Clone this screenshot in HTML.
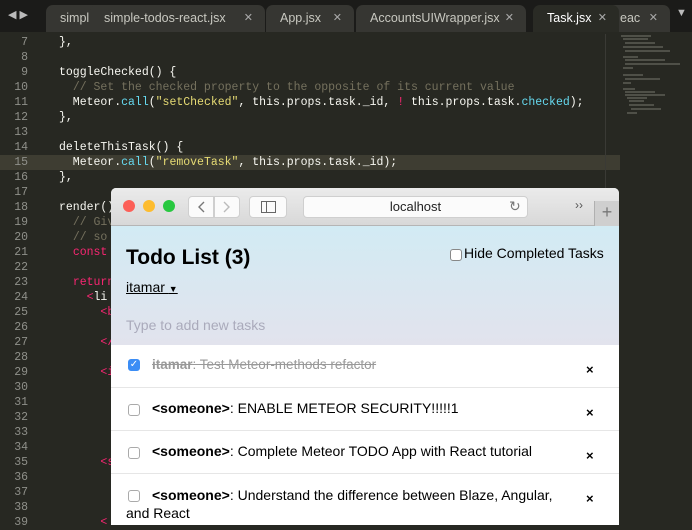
<!DOCTYPE html>
<html><head><meta charset="utf-8"><style>
*{margin:0;padding:0;box-sizing:border-box}
body{width:692px;height:525px;overflow:hidden;background:#272822;position:relative;font-family:"Liberation Sans",sans-serif}
#tabbar{position:absolute;left:0;top:0;width:692px;height:32px;background:#1b1b19}
.tab{position:absolute;top:5px;height:27px;background:#363632;border-radius:7px 7px 0 0;color:#c8c8c0;font-size:12.5px;line-height:26px;padding-left:14px;white-space:nowrap;overflow:hidden}
.tab .x{position:absolute;right:12px;top:0;font-size:11px;color:#aaa}
.tab.active{background:#2a2b25;color:#fff}
#code{position:absolute;left:0;top:35px;width:620px;font-family:"Liberation Mono",monospace;font-size:11.5px;line-height:15px;color:#f8f8f2}
.ln{display:block;height:15px;white-space:pre;position:relative}
.ln i{font-style:normal;display:inline-block;width:28px;text-align:right;color:#8f908a;margin-right:31px}
.hl{background:#3e3d32}
.c{color:#75715e}.s{color:#e6db74}.f{color:#66d9ef}.k{color:#f92672}
#mini{position:absolute;left:621px;top:35px;width:71px;height:80px}
#browser{position:absolute;left:111px;top:188px;width:508px;height:337px;background:#fff;border-radius:5px 5px 0 0;overflow:hidden}
#title{height:38px;background:linear-gradient(#ebebeb,#d8d8d8);border-bottom:1px solid #b5b5b5;position:relative}
.dot{position:absolute;top:12px;width:12px;height:12px;border-radius:50%}
.btn{position:absolute;top:8px;height:22px;background:#fbfbfb;border:1px solid #cfcfcf;border-radius:4px}
#content{position:absolute;top:38px;left:0;width:508px;height:119px;background:linear-gradient(#d2ebf4,#e2e3ed)}
.item{position:absolute;left:0;width:508px;border-top:1px solid #e6e6e6;font-size:14px;color:#000}
.cb{position:absolute;left:17px;width:12px;height:12px;border:1px solid #aaa;border-radius:3px;background:#fff}
.del{position:absolute;left:475px;font-weight:bold;font-size:13px}
</style></head><body>
<div id="tabbar">
<div style="position:absolute;left:8px;top:8px;color:#bbb;font-size:11px">◀ ▶</div>
<div class="tab" style="left:46px;width:110px">simpl</div>
<div class="tab" style="left:90px;width:175px">simple-todos-react.jsx<span class="x">✕</span></div>
<div class="tab" style="left:266px;width:88px">App.jsx<span class="x">✕</span></div>
<div class="tab" style="left:356px;width:170px">AccountsUIWrapper.jsx<span class="x">✕</span></div>
<div class="tab" style="left:580px;width:90px;padding-left:40px">eac<span class="x">✕</span></div>
<div class="tab active" style="left:533px;width:86px">Task.jsx<span class="x">✕</span></div>
<div style="position:absolute;left:676px;top:7px;color:#bbb;font-size:11px">▼</div>
</div>
<div id="code">
<span class="ln"><i>7</i>},</span>
<span class="ln"><i>8</i></span>
<span class="ln"><i>9</i>toggleChecked() {</span>
<span class="ln"><i>10</i>  <span class="c">// Set the checked property to the opposite of its current value</span></span>
<span class="ln"><i>11</i>  Meteor.<span class="f">call</span>(<span class="s">"setChecked"</span>, this.props.task._id, <span class="k">!</span> this.props.task.<span class="f">checked</span>);</span>
<span class="ln"><i>12</i>},</span>
<span class="ln"><i>13</i></span>
<span class="ln"><i>14</i>deleteThisTask() {</span>
<span class="ln hl"><i>15</i>  Meteor.<span class="f">call</span>(<span class="s">"removeTask"</span>, this.props.task._id);</span>
<span class="ln"><i>16</i>},</span>
<span class="ln"><i>17</i></span>
<span class="ln"><i>18</i>render() {</span>
<span class="ln"><i>19</i>  <span class="c">// Give</span></span>
<span class="ln"><i>20</i>  <span class="c">// so</span></span>
<span class="ln"><i>21</i>  <span class="k">const</span></span>
<span class="ln"><i>22</i></span>
<span class="ln"><i>23</i>  <span class="k">return</span></span>
<span class="ln"><i>24</i>    <span class="k">&lt;</span>li</span>
<span class="ln"><i>25</i>      <span class="k">&lt;b</span></span>
<span class="ln"><i>26</i></span>
<span class="ln"><i>27</i>      <span class="k">&lt;/</span></span>
<span class="ln"><i>28</i></span>
<span class="ln"><i>29</i>      <span class="k">&lt;i</span></span>
<span class="ln"><i>30</i></span>
<span class="ln"><i>31</i></span>
<span class="ln"><i>32</i></span>
<span class="ln"><i>33</i></span>
<span class="ln"><i>34</i></span>
<span class="ln"><i>35</i>      <span class="k">&lt;s</span></span>
<span class="ln"><i>36</i></span>
<span class="ln"><i>37</i></span>
<span class="ln"><i>38</i></span>
<span class="ln"><i>39</i>      <span class="k">&lt;</span></span>
</div>
<div style="position:absolute;left:605px;top:34px;width:1px;height:491px;background:#3a3a35"></div>
<svg id="mini" viewBox="0 0 71 80">
<g stroke="#77776f" stroke-width="1">
<path d="M0 1h30M2 4h25M4 8h30M2 12h40M4 16h45"/>
<path d="M2 22h15M4 25h40M4 29h55M2 33h10" />
<path d="M2 40h20M4 44h35M2 48h8"/>
<path d="M2 54h12M4 57h30M4 60h40M6 63h20M8 66h15M8 70h25M10 74h30M6 78h10"/>
</g></svg>
<div id="browser">
<div id="title">
<div class="dot" style="left:12px;background:#fc5f57"></div>
<div class="dot" style="left:32px;background:#fdbc2e"></div>
<div class="dot" style="left:52px;background:#28c840"></div>
<div class="btn" style="left:77px;width:26px;border-radius:4px 0 0 4px"></div>
<div class="btn" style="left:103px;width:26px;border-radius:0 4px 4px 0"></div>
<svg style="position:absolute;left:77px;top:8px" width="52" height="22"><path d="M16 6l-5 5 5 5" fill="none" stroke="#777" stroke-width="1.4"/><path d="M36 6l5 5-5 5" fill="none" stroke="#bbb" stroke-width="1.4"/></svg>
<div class="btn" style="left:138px;width:38px"></div>
<svg style="position:absolute;left:138px;top:8px" width="38" height="22"><rect x="12.5" y="5.5" width="14" height="11" fill="none" stroke="#666"/><path d="M17.5 6v10" stroke="#666"/></svg>
<div class="btn" style="left:192px;width:225px;text-align:center;font-size:13px;line-height:20px;color:#222">localhost</div>
<div style="position:absolute;left:398px;top:10px;font-size:14px;color:#777">↻</div>
<div style="position:absolute;left:464px;top:10px;font-size:12px;color:#555">››</div>
<div style="position:absolute;left:483px;top:13px;width:25px;height:25px;background:#cfcfcf;border-left:1px solid #b0b0b0;color:#777;text-align:center;font-size:18px;line-height:22px">+</div>
</div>
<div id="content">
<div style="position:absolute;left:15px;top:20px;font-size:21px;font-weight:bold">Todo List (3)</div>
<div style="position:absolute;left:15px;top:53px;font-size:14px;text-decoration:underline">itamar <span style="font-size:9px">▼</span></div>
<div style="position:absolute;left:339px;top:23px;width:12px;height:12px;border:1px solid #888;border-radius:3px;background:#fff"></div>
<div style="position:absolute;left:353px;top:19px;font-size:14px">Hide Completed Tasks</div>
<div style="position:absolute;left:15px;top:91px;font-size:14px;color:#aab">Type to add new tasks</div>
</div>
<div class="item" style="top:157px;height:42px;border-top:none">
<div class="cb" style="top:14px;background:#3b8df5;border-color:#3b8df5;color:#fff;font-size:10px;line-height:10px;text-align:center">✓</div>
<div style="position:absolute;left:41px;top:12px;font-size:13.5px;color:#999;text-decoration:line-through"><b>itamar</b>: Test Meteor-methods refactor</div>
<div class="del" style="top:17px">×</div>
</div>
<div class="item" style="top:199px;height:43px">
<div class="cb" style="top:16px"></div>
<div style="position:absolute;left:41px;top:12px"><b>&lt;someone&gt;</b>: ENABLE METEOR SECURITY!!!!!1</div>
<div class="del" style="top:17px">×</div>
</div>
<div class="item" style="top:242px;height:43px">
<div class="cb" style="top:16px"></div>
<div style="position:absolute;left:41px;top:12px"><b>&lt;someone&gt;</b>: Complete Meteor TODO App with React tutorial</div>
<div class="del" style="top:17px">×</div>
</div>
<div class="item" style="top:285px;height:60px">
<div class="cb" style="top:16px"></div>
<div style="position:absolute;left:15px;top:12px;width:445px;line-height:18px;text-indent:26px"><b>&lt;someone&gt;</b>: Understand the difference between Blaze, Angular, and React</div>
<div class="del" style="top:17px">×</div>
</div>
</div>
</body></html>
